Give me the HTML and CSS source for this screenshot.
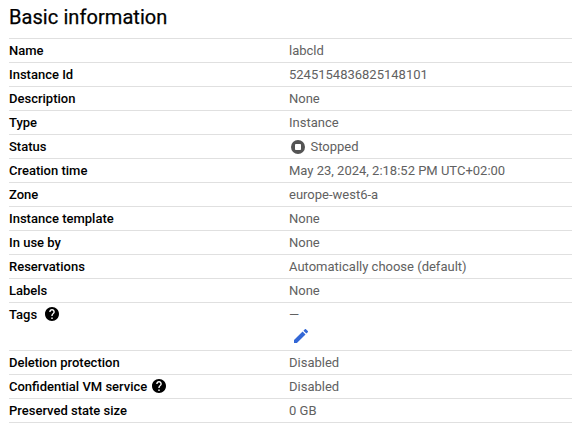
FILE: index.html
```html
<!DOCTYPE html>
<html lang="en">
<head>
<meta charset="utf-8">
<title>Basic information</title>
<link rel="stylesheet" href="styles.css">
</head>
<body>
<h2 class="title">Basic information</h2>
<dl class="details">
<div class="row"><dt>Name</dt><dd>labcld</dd></div>
<div class="row"><dt>Instance Id</dt><dd>5245154836825148101</dd></div>
<div class="row"><dt>Description</dt><dd>None</dd></div>
<div class="row"><dt>Type</dt><dd>Instance</dd></div>
<div class="row"><dt>Status</dt><dd><svg class="stopped" viewBox="0 0 14 14"><circle cx="7" cy="7" r="7" fill="#545454"/><rect x="4" y="4" width="6" height="6" rx=".8" fill="#fff"/></svg>Stopped</dd></div>
<div class="row"><dt>Creation time</dt><dd>May 23, 2024, 2:18:52 PM UTC+02:00</dd></div>
<div class="row"><dt>Zone</dt><dd>europe-west6-a</dd></div>
<div class="row"><dt>Instance template</dt><dd>None</dd></div>
<div class="row"><dt>In use by</dt><dd>None</dd></div>
<div class="row"><dt>Reservations</dt><dd>Automatically choose (default)</dd></div>
<div class="row"><dt>Labels</dt><dd>None</dd></div>
<div class="row tags"><dt>Tags<svg class="help wide" viewBox="2 2 20 20"><path d="M12 2C6.48 2 2 6.48 2 12s4.48 10 10 10 10-4.48 10-10S17.52 2 12 2zm1 17h-2v-2h2v2zm2.07-7.75-.9.92C13.45 12.9 13 13.5 13 15h-2v-.5c0-1.1.45-2.1 1.17-2.83l1.24-1.26c.37-.36.59-.86.59-1.41 0-1.1-.9-2-2-2s-2 .9-2 2H8c0-2.210 1.790-4 4-4s4 1.790 4 4c0 .88-.36 1.680-.93 2.250z"/></svg></dt><dd><span>—</span><svg class="edit" viewBox="3 3 18 18"><path d="M3 17.250V21h3.750L17.810 9.940l-3.750-3.750L3 17.250zM20.710 7.040a1 1 0 0 0 0-1.410l-2.340-2.340a1 1 0 0 0-1.410 0l-1.830 1.830 3.750 3.750 1.830-1.830z"/></svg></dd></div>
<div class="row"><dt>Deletion protection</dt><dd>Disabled</dd></div>
<div class="row"><dt>Confidential VM service<svg class="help" viewBox="2 2 20 20"><path d="M12 2C6.48 2 2 6.48 2 12s4.48 10 10 10 10-4.48 10-10S17.52 2 12 2zm1 17h-2v-2h2v2zm2.07-7.75-.9.92C13.45 12.9 13 13.5 13 15h-2v-.5c0-1.1.45-2.1 1.17-2.83l1.24-1.26c.37-.36.59-.86.59-1.41 0-1.1-.9-2-2-2s-2 .9-2 2H8c0-2.210 1.790-4 4-4s4 1.790 4 4c0 .88-.36 1.680-.93 2.250z"/></svg></dt><dd>Disabled</dd></div>
<div class="row"><dt>Preserved state size</dt><dd>0 GB</dd></div>
</dl>
</body>
</html>
```
FILE: styles.css
```css
body {
  margin: 0;
  background: #fff;
  font-family: Roboto, sans-serif;
  font-size: 13px;
  line-height: 23px;
  color: #000;
}
.title {
  margin: 0;
  padding: 5px 9px 9px;
  font-size: 20px;
  font-weight: 400;
  line-height: 24px;
  letter-spacing: .07px;
  -webkit-text-stroke: .25px #000;
}
.details {
  margin: 0 0 0 9px;
  border-bottom: 1px solid #e0e0e0;
}
.row {
  display: grid;
  grid-template-columns: 280px 1fr;
  height: 23px;
  border-top: 1px solid #e0e0e0;
  white-space: nowrap;
}
.tags {
  height: 47px;
}
dt {
  display: flex;
  font-weight: 500;
}
dd {
  display: flex;
  margin: 0;
  color: #616161;
}
.help {
  width: 14px;
  height: 14px;
  margin: 4px 0 0 5px;
  stroke: #000;
  stroke-width: 0;
}
.wide {
  margin-left: 8px;
}
.stopped {
  width: 14px;
  height: 14px;
  margin: 5px 5.5px 0 2px;
}
.tags dd {
  flex-direction: column;
}
.edit {
  width: 14px;
  height: 14px;
  margin: 3px 0 0 5px;
  fill: #3367d6;
}
```
